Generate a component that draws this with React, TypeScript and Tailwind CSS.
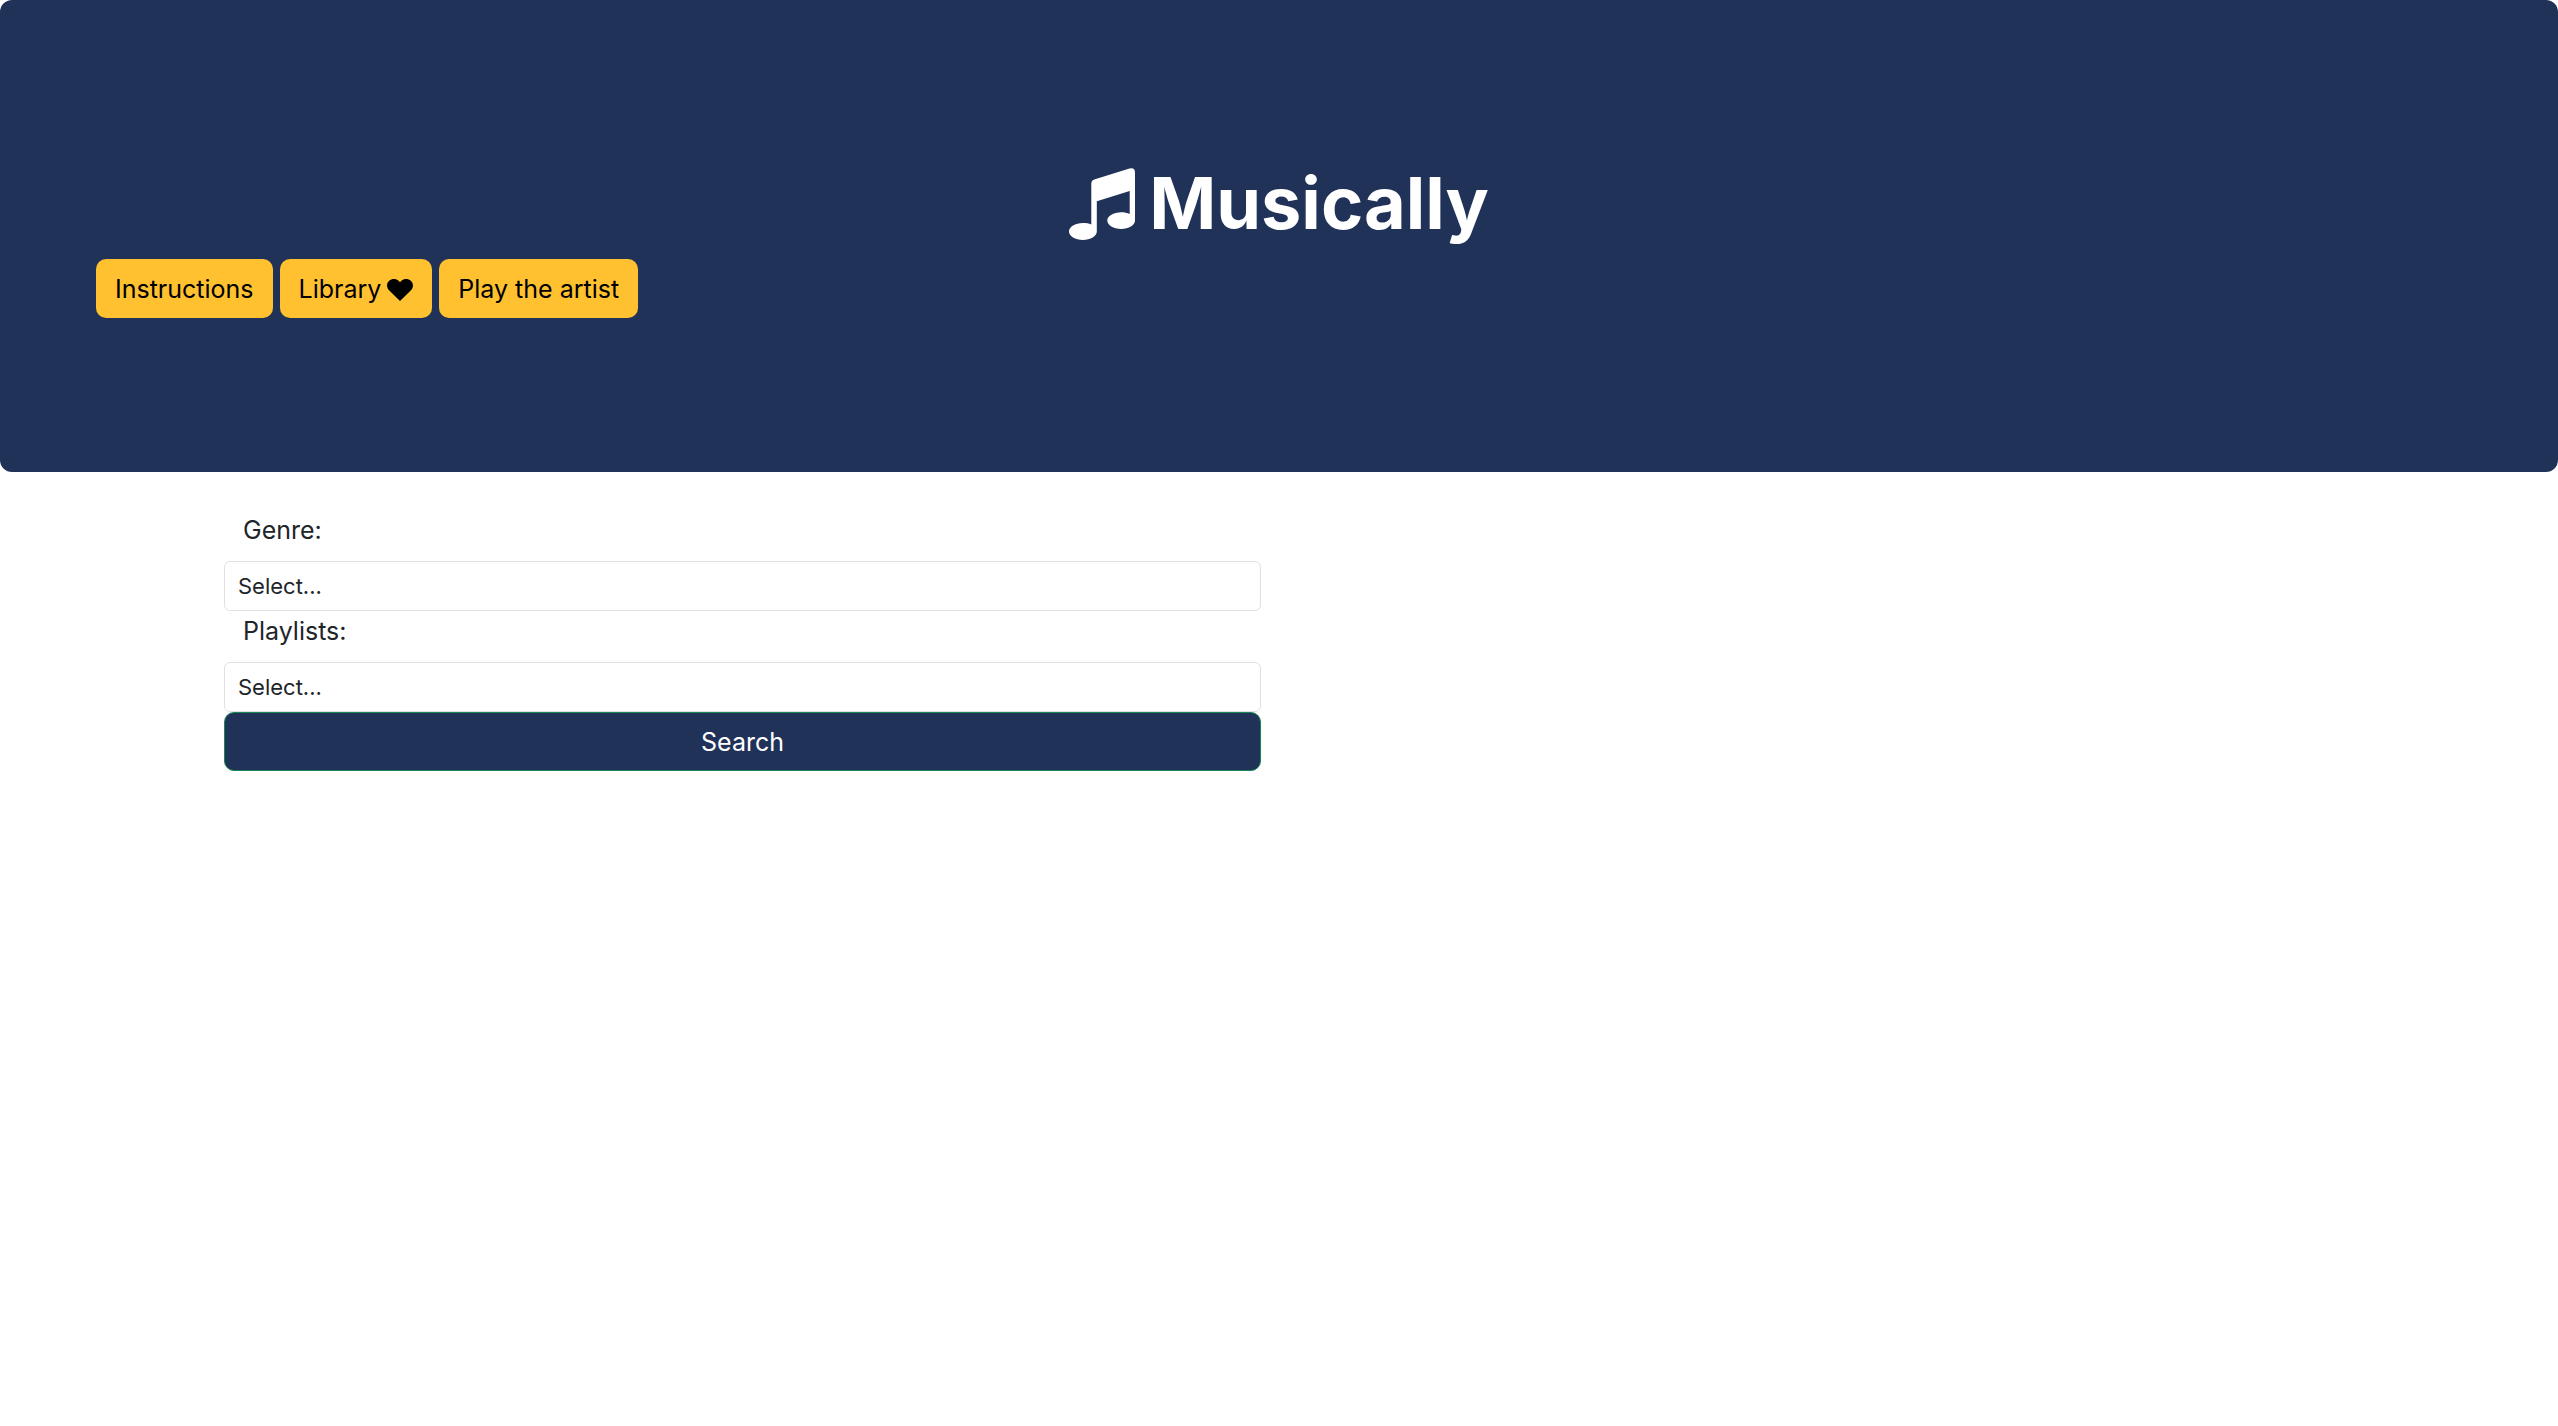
import { useId } from "react";

function MusicNotes() {
  return (
    <svg viewBox="0 0 66 72" className="h-[72px] w-[66px] fill-white" aria-hidden="true">
      <path d="M22.300 56.500V15.500Q22.300 12.600 25.200 11.500L60.500 .4Q66 -.9 66 4.500V52.600C66 57.300 59.800 61 52.200 61C44.500 61 38.300 57.300 38.300 52.600C38.300 48 44.500 44.300 52.200 44.300C55.300 44.300 58.300 44.900 60.700 45.900V22.900L27.800 33.300V63.500C27.800 68.200 21.500 72 13.900 72C6.200 72 0 68.200 0 63.500C0 58.900 6.200 55.100 13.900 55.100C17 55.100 19.900 55.600 22.300 56.500Z" />
    </svg>
  );
}

function Heart() {
  return (
    <svg viewBox="0 0 26 22" className="h-[22px] w-[26px] fill-black" aria-hidden="true">
      <path d="M13 22L2 11.300C-.6 8.500-.6 4.500 2 2C4.700-.6 9-.6 11.600 1.800L13 3.200L14.400 1.800C17-.6 21.300-.6 24 2C26.600 4.500 26.600 8.500 24 11.300Z" />
    </svg>
  );
}

const navButton =
  "flex h-[59px] items-center gap-1.5 rounded-[10px] bg-[#ffc130] px-[19px] pt-0.5 text-[25px] text-black cursor-pointer";

function SelectField({ label }: { label: string }) {
  const id = useId();
  return (
    <>
      <label htmlFor={id} className="block h-[51px] px-[19px] text-[25px] leading-10">
        {label}
      </label>
      <select
        id={id}
        className="block h-[50px] w-full appearance-none rounded-md border border-[#dee2e6] bg-white px-[13px] text-[22px]"
      >
        <option>Select...</option>
      </select>
    </>
  );
}

export default function App() {
  return (
    <div className="min-h-screen bg-white font-['Inter',sans-serif] text-[#212529]">
      <header className="rounded-xl bg-[#213259] px-24 pt-[156px] pb-[154px]">
        <h1 className="flex h-[103px] items-start justify-center gap-3.5 text-[72px] leading-[94px] font-bold text-white">
          <span className="pt-3">
            <MusicNotes />
          </span>
          Musically
        </h1>
        <nav className="flex gap-[7px]">
          <button type="button" className={navButton}>Instructions</button>
          <button type="button" className={navButton}>
            Library
            <Heart />
          </button>
          <button type="button" className={navButton}>Play the artist</button>
        </nav>
      </header>
      <main className="grid grid-cols-2 gap-9 px-56 pt-[38px]">
        <form onSubmit={(event) => event.preventDefault()}>
          <SelectField label="Genre:" />
          <SelectField label="Playlists:" />
          <button
            type="submit"
            className="block h-[59px] w-full cursor-pointer rounded-[10px] border border-[#198754] bg-[#213259] pt-0.5 text-[25px] text-white"
          >
            Search
          </button>
        </form>
      </main>
    </div>
  );
}
